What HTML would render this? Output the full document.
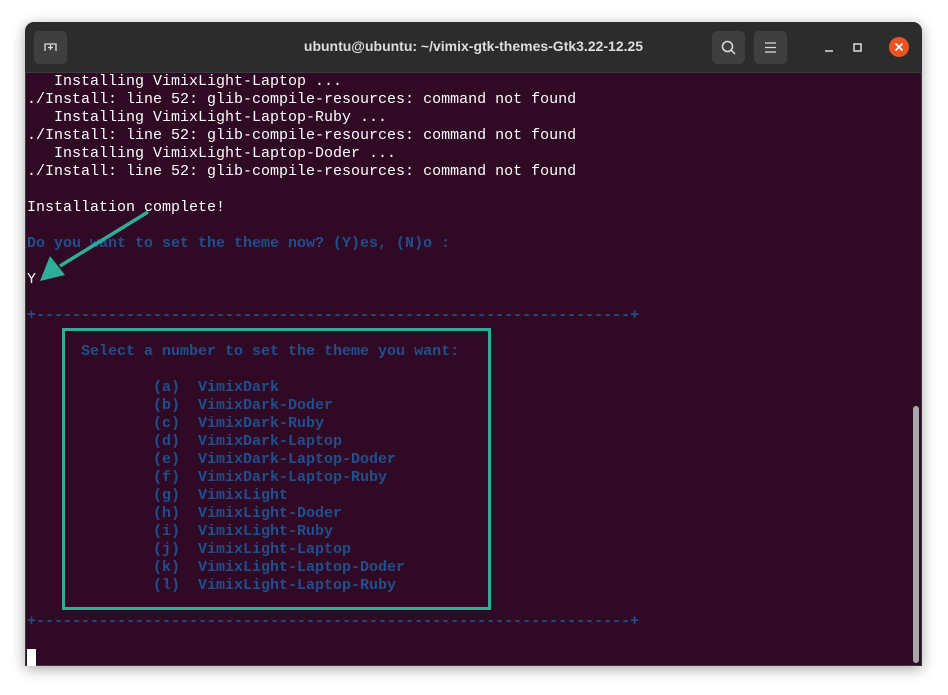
<!DOCTYPE html>
<html><head><meta charset="utf-8"><style>
body{margin:0;width:948px;height:695px;background:#fff;position:relative;overflow:hidden;font-family:"Liberation Sans",sans-serif}
.win{position:absolute;left:25px;top:22px;width:897px;height:644px;background:#2c2c2c;border-radius:9px 9px 0 0;box-shadow:0 3px 14px rgba(0,0,0,.35);overflow:hidden}
.term{position:absolute;left:0;top:50px;width:897px;height:594px;background:#300a24;border:1px solid #3a3a3a;box-sizing:border-box}
.title{position:absolute;left:0;top:0;width:897px;height:50px;text-align:center;line-height:48px;color:#ddd;font-weight:bold;font-size:14px}
.btn{position:absolute;top:9px;width:33px;height:33px;background:#3f3f3f;border-radius:5px}
pre{position:absolute;left:1px;top:0;margin:0;font-family:"Liberation Mono",monospace;font-size:15px;line-height:18px;color:#fff}
.b{color:#1f4f8f;font-weight:bold}
.sb{position:absolute;left:887px;top:333px;width:6px;height:257px;background:#a8a8a8;border-radius:3px}
</style></head><body>
<div class="win">
<div class="title">ubuntu@ubuntu: ~/vimix-gtk-themes-Gtk3.22-12.25</div>
<div class="btn" style="left:9px"><svg width="33" height="33"><path d="M11 20V13h11v7M16.5 14v5M14 16.5h5" stroke="#ddd" stroke-width="1.3" fill="none"/></svg></div>
<div class="btn" style="left:687px"><svg width="33" height="33"><circle cx="15.5" cy="15.5" r="5" stroke="#ddd" stroke-width="1.5" fill="none"/><path d="M19 19l4 4" stroke="#ddd" stroke-width="1.5"/></svg></div>
<div class="btn" style="left:729px"><svg width="33" height="33"><path d="M11 12h11M11 16.5h11M11 21h11" stroke="#ddd" stroke-width="1.3"/></svg></div>
<svg style="position:absolute;left:790px;top:10px" width="100" height="30"><path d="M10 19h8" stroke="#ddd" stroke-width="1.5"/><rect x="39" y="12" width="7" height="7" stroke="#ddd" stroke-width="1.5" fill="none"/><circle cx="84" cy="15" r="10" fill="#e95420"/><path d="M80.5 11.5l7 7M87.5 11.5l-7 7" stroke="#fff" stroke-width="1.6"/></svg>
<div class="term">
<pre>   Installing VimixLight-Laptop ...
./Install: line 52: glib-compile-resources: command not found
   Installing VimixLight-Laptop-Ruby ...
./Install: line 52: glib-compile-resources: command not found
   Installing VimixLight-Laptop-Doder ...
./Install: line 52: glib-compile-resources: command not found

Installation complete!

<span class="b">Do you want to set the theme now? (Y)es, (N)o :</span>

Y

<span class="b">+------------------------------------------------------------------+</span>

<span class="b">      Select a number to set the theme you want:</span>

<span class="b">              (a)  VimixDark
              (b)  VimixDark-Doder
              (c)  VimixDark-Ruby
              (d)  VimixDark-Laptop
              (e)  VimixDark-Laptop-Doder
              (f)  VimixDark-Laptop-Ruby
              (g)  VimixLight
              (h)  VimixLight-Doder
              (i)  VimixLight-Ruby
              (j)  VimixLight-Laptop
              (k)  VimixLight-Laptop-Doder
              (l)  VimixLight-Laptop-Ruby</span>

<span class="b">+------------------------------------------------------------------+</span>

<span style="background:#fff">&nbsp;</span></pre>
<div class="sb"></div>
</div>
</div>
<svg style="position:absolute;left:0;top:0" width="948" height="695">
<rect x="63.5" y="329.5" width="426" height="279" stroke="#2fae97" stroke-width="3" fill="none"/>
<path d="M148 212L60 266" stroke="#2fae97" stroke-width="3.5"/>
<path d="M40 281L50 256L65 275Z" fill="#2fae97"/>
</svg>
</body></html>
